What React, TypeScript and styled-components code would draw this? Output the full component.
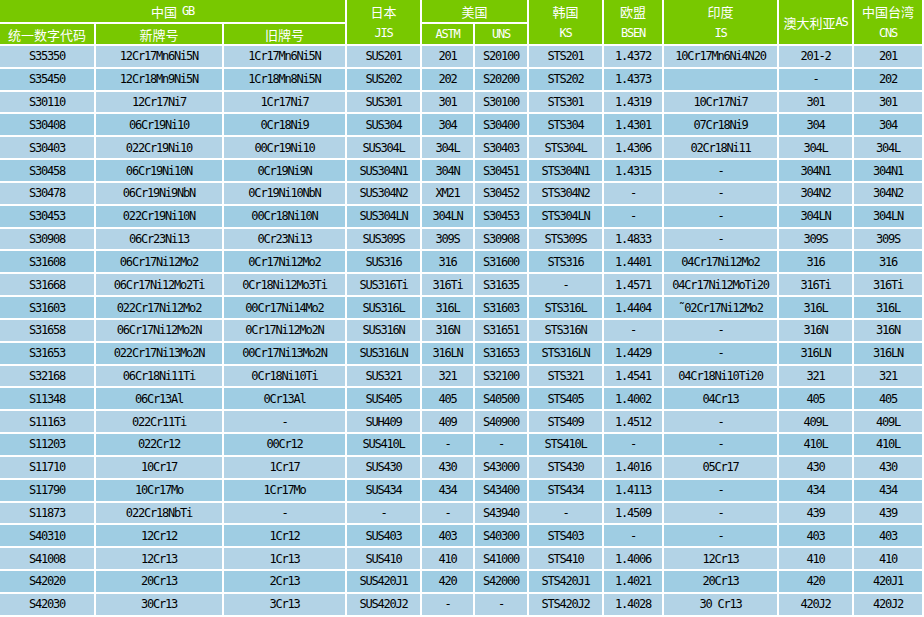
import React from 'react';
import styled, { createGlobalStyle } from 'styled-components';

const GlobalStyle = createGlobalStyle`
  html, body { margin: 0; padding: 0; background: #ffffff; }
  body { font-family: "DejaVu Sans Mono", "Noto Sans CJK SC", monospace; }
`;

const Table = styled.div`
  display: grid;
  grid-template-columns: 94px 126px 121px 73px 51px 52px 73px 58px 113px 73px 68px;
  grid-template-rows: 22px 20px;
  grid-auto-rows: 20.84px;
  gap: 2px;
  width: 922px;
  padding-right: 2px;
  background: #ffffff;
`;

const HeadCell = styled.div<{ $col: string; $row: string; $stack?: boolean }>`
  grid-column: ${(p) => p.$col};
  grid-row: ${(p) => p.$row};
  background: #78c800;
  color: #ffffff;
  display: flex;
  flex-direction: column;
  align-items: center;
  justify-content: ${(p) => (p.$stack ? 'flex-start' : 'center')};
  white-space: nowrap;
`;

const HeadLine = styled.div`
  height: 22px;
  display: flex;
  align-items: center;
  justify-content: center;
`;

const Cjk = styled.span`
  font-family: "Noto Sans CJK SC", sans-serif;
  font-size: 13px;
  line-height: 1;
`;

const Latin = styled.span<{ $gap?: boolean }>`
  font-family: "DejaVu Sans Mono", monospace;
  font-size: 12px;
  letter-spacing: -1.2px;
  line-height: 1;
  margin-left: ${(p) => (p.$gap ? '5px' : '0')};
`;

const Cell = styled.div<{ $alt: boolean }>`
  background: ${(p) => (p.$alt ? '#9fcde3' : '#b3d3e6')};
  color: #000000;
  display: flex;
  align-items: center;
  justify-content: center;
  font-family: "DejaVu Sans Mono", monospace;
  font-size: 12px;
  letter-spacing: -1.2px;
  white-space: nowrap;
`;

const rows: string[][] = [
  ['S35350', '12Cr17Mn6Ni5N', '1Cr17Mn6Ni5N', 'SUS201', '201', 'S20100', 'STS201', '1.4372', '10Cr17Mn6Ni4N20', '201-2', '201'],
  ['S35450', '12Cr18Mn9Ni5N', '1Cr18Mn8Ni5N', 'SUS202', '202', 'S20200', 'STS202', '1.4373', '', '-', '202'],
  ['S30110', '12Cr17Ni7', '1Cr17Ni7', 'SUS301', '301', 'S30100', 'STS301', '1.4319', '10Cr17Ni7', '301', '301'],
  ['S30408', '06Cr19Ni10', '0Cr18Ni9', 'SUS304', '304', 'S30400', 'STS304', '1.4301', '07Cr18Ni9', '304', '304'],
  ['S30403', '022Cr19Ni10', '00Cr19Ni10', 'SUS304L', '304L', 'S30403', 'STS304L', '1.4306', '02Cr18Ni11', '304L', '304L'],
  ['S30458', '06Cr19Ni10N', '0Cr19Ni9N', 'SUS304N1', '304N', 'S30451', 'STS304N1', '1.4315', '-', '304N1', '304N1'],
  ['S30478', '06Cr19Ni9NbN', '0Cr19Ni10NbN', 'SUS304N2', 'XM21', 'S30452', 'STS304N2', '-', '-', '304N2', '304N2'],
  ['S30453', '022Cr19Ni10N', '00Cr18Ni10N', 'SUS304LN', '304LN', 'S30453', 'STS304LN', '-', '-', '304LN', '304LN'],
  ['S30908', '06Cr23Ni13', '0Cr23Ni13', 'SUS309S', '309S', 'S30908', 'STS309S', '1.4833', '-', '309S', '309S'],
  ['S31608', '06Cr17Ni12Mo2', '0Cr17Ni12Mo2', 'SUS316', '316', 'S31600', 'STS316', '1.4401', '04Cr17Ni12Mo2', '316', '316'],
  ['S31668', '06Cr17Ni12Mo2Ti', '0Cr18Ni12Mo3Ti', 'SUS316Ti', '316Ti', 'S31635', '-', '1.4571', '04Cr17Ni12MoTi20', '316Ti', '316Ti'],
  ['S31603', '022Cr17Ni12Mo2', '00Cr17Ni14Mo2', 'SUS316L', '316L', 'S31603', 'STS316L', '1.4404', '˜02Cr17Ni12Mo2', '316L', '316L'],
  ['S31658', '06Cr17Ni12Mo2N', '0Cr17Ni12Mo2N', 'SUS316N', '316N', 'S31651', 'STS316N', '-', '-', '316N', '316N'],
  ['S31653', '022Cr17Ni13Mo2N', '00Cr17Ni13Mo2N', 'SUS316LN', '316LN', 'S31653', 'STS316LN', '1.4429', '-', '316LN', '316LN'],
  ['S32168', '06Cr18Ni11Ti', '0Cr18Ni10Ti', 'SUS321', '321', 'S32100', 'STS321', '1.4541', '04Cr18Ni10Ti20', '321', '321'],
  ['S11348', '06Cr13Al', '0Cr13Al', 'SUS405', '405', 'S40500', 'STS405', '1.4002', '04Cr13', '405', '405'],
  ['S11163', '022Cr11Ti', '-', 'SUH409', '409', 'S40900', 'STS409', '1.4512', '-', '409L', '409L'],
  ['S11203', '022Cr12', '00Cr12', 'SUS410L', '-', '-', 'STS410L', '-', '-', '410L', '410L'],
  ['S11710', '10Cr17', '1Cr17', 'SUS430', '430', 'S43000', 'STS430', '1.4016', '05Cr17', '430', '430'],
  ['S11790', '10Cr17Mo', '1Cr17Mo', 'SUS434', '434', 'S43400', 'STS434', '1.4113', '-', '434', '434'],
  ['S11873', '022Cr18NbTi', '-', '-', '-', 'S43940', '-', '1.4509', '-', '439', '439'],
  ['S40310', '12Cr12', '1Cr12', 'SUS403', '403', 'S40300', 'STS403', '-', '-', '403', '403'],
  ['S41008', '12Cr13', '1Cr13', 'SUS410', '410', 'S41000', 'STS410', '1.4006', '12Cr13', '410', '410'],
  ['S42020', '20Cr13', '2Cr13', 'SUS420J1', '420', 'S42000', 'STS420J1', '1.4021', '20Cr13', '420', '420J1'],
  ['S42030', '30Cr13', '3Cr13', 'SUS420J2', '-', '-', 'STS420J2', '1.4028', '30 Cr13', '420J2', '420J2'],
];

type Stacked = { col: string; cjk: string; latin: string };
const stacked: Stacked[] = [
  { col: '4', cjk: '日本', latin: 'JIS' },
  { col: '7', cjk: '韩国', latin: 'KS' },
  { col: '8', cjk: '欧盟', latin: 'BSEN' },
  { col: '9', cjk: '印度', latin: 'IS' },
];

export default function App() {
  return (
    <>
      <GlobalStyle />
      <Table>
        <HeadCell $col="1 / span 3" $row="1">
          <HeadLine>
            <Cjk>中国</Cjk>
            <Latin $gap>GB</Latin>
          </HeadLine>
        </HeadCell>
        {stacked.slice(0, 1).map((s) => (
          <HeadCell key={s.col} $col={s.col} $row="1 / span 2" $stack>
            <HeadLine><Cjk>{s.cjk}</Cjk></HeadLine>
            <HeadLine><Latin>{s.latin}</Latin></HeadLine>
          </HeadCell>
        ))}
        <HeadCell $col="5 / span 2" $row="1">
          <HeadLine><Cjk>美国</Cjk></HeadLine>
        </HeadCell>
        {stacked.slice(1).map((s) => (
          <HeadCell key={s.col} $col={s.col} $row="1 / span 2" $stack>
            <HeadLine><Cjk>{s.cjk}</Cjk></HeadLine>
            <HeadLine><Latin>{s.latin}</Latin></HeadLine>
          </HeadCell>
        ))}
        <HeadCell $col="10" $row="1 / span 2">
          <HeadLine>
            <Cjk>澳大利亚</Cjk>
            <Latin>AS</Latin>
          </HeadLine>
        </HeadCell>
        <HeadCell $col="11" $row="1 / span 2" $stack>
          <HeadLine><Cjk>中国台湾</Cjk></HeadLine>
          <HeadLine><Latin>CNS</Latin></HeadLine>
        </HeadCell>
        <HeadCell $col="1" $row="2"><Cjk>统一数字代码</Cjk></HeadCell>
        <HeadCell $col="2" $row="2"><Cjk>新牌号</Cjk></HeadCell>
        <HeadCell $col="3" $row="2"><Cjk>旧牌号</Cjk></HeadCell>
        <HeadCell $col="5" $row="2"><Latin>ASTM</Latin></HeadCell>
        <HeadCell $col="6" $row="2"><Latin>UNS</Latin></HeadCell>
        {rows.map((r, i) =>
          r.map((v, j) => (
            <Cell key={`${i}-${j}`} $alt={i % 2 === 1}>
              {v}
            </Cell>
          ))
        )}
      </Table>
    </>
  );
}
